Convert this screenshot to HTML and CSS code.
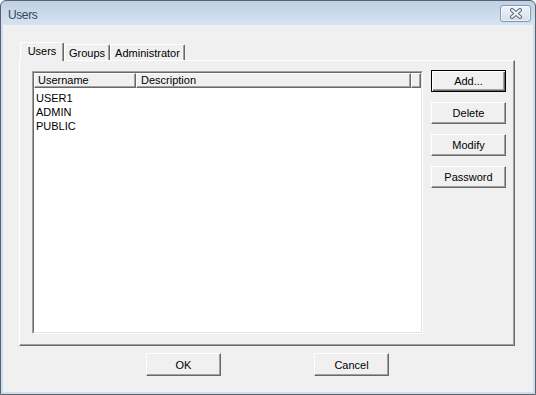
FILE: index.html
```html
<!DOCTYPE html>
<html lang="en">
<head>
  <meta charset="UTF-8">
  <title>Users</title>
  <link rel="stylesheet" href="styles.css">
</head>
<body>

  <div class="window">
    <div class="titlebar">
      <span class="title">Users</span>
      <button class="close" aria-label="Close">
        <svg width="14" height="11" viewBox="0 0 14 11">
          <path d="M3 2 L11 9 M11 2 L3 9" stroke="#5b6778" stroke-width="4" stroke-linecap="round"/>
          <path d="M3 2 L11 9 M11 2 L3 9" stroke="#f4f6f9" stroke-width="2" stroke-linecap="round"/>
        </svg>
      </button>
    </div>

    <div class="client">
      <div class="tabs">
        <div class="tab active tab-users">Users</div>
        <div class="tab tab-groups">Groups</div>
        <div class="tab tab-admin">Administrator</div>
      </div>

      <div class="panel">
        <div class="listview">
          <div class="listview-inner">
            <div class="lv-header">
              <div class="lv-col col-name">Username</div>
              <div class="lv-col col-desc">Description</div>
              <div class="lv-col col-fill"></div>
            </div>
            <ul class="lv-rows">
              <li>USER1</li>
              <li>ADMIN</li>
              <li>PUBLIC</li>
            </ul>
          </div>
        </div>

        <div class="side-buttons">
          <button class="btn default">Add...</button>
          <button class="btn">Delete</button>
          <button class="btn">Modify</button>
          <button class="btn">Password</button>
        </div>
      </div>

      <div class="dialog-buttons">
        <button class="btn">OK</button>
        <button class="btn">Cancel</button>
      </div>
    </div>
  </div>

</body>
</html>
```

FILE: styles.css
```css
body {
  margin: 0;
  background: #fff;
  font-family: "Liberation Sans", Arial, sans-serif;
  font-size: 11px;
  color: #000;
}

.window {
  width: 536px;
  height: 395px;
  box-sizing: border-box;
  border: 1px solid #58626e;
  border-radius: 6px 6px 0 0;
  padding: 0 2px 2px 2px;
  background: linear-gradient(#bfd0e4, #d6e3f1 24px, #cfdeee 25px);
  display: flex;
  flex-direction: column;
}

.titlebar {
  height: 24px;
  flex: none;
  display: flex;
  align-items: center;
  justify-content: space-between;
  padding: 0 2px 0 5px;
}

.title {
  font-size: 12px;
  letter-spacing: -0.4px;
  color: #3a4554;
  margin-top: 3px;
}

.close {
  width: 31px;
  height: 17px;
  padding: 0;
  border: 1px solid #8496b0;
  border-radius: 3px;
  background: linear-gradient(#eef3f9, #d5dfec);
  box-shadow: inset 0 0 0 1px rgba(255,255,255,0.6);
  display: flex;
  align-items: center;
  justify-content: center;
}

.client {
  flex: 1;
  background: #f0f0f0;
  border: 1px solid #eaf1f9;
  display: flex;
  flex-direction: column;
  padding: 16px 17px 15px 15px;
}

/* tab strip */
.tabs {
  display: flex;
  align-items: flex-end;
  height: 18px;
  padding-left: 1px;
  position: relative;
  z-index: 1;
}

.tab {
  box-sizing: border-box;
  height: 16px;
  padding-top: 1px;
  line-height: 15px;
  text-align: center;
  border-top: 1px solid #fff;
  border-left: 1px solid #fff;
  border-right: 1px solid #696969;
  border-radius: 2px 2px 0 0;
  box-shadow: inset -1px 0 #a0a0a0;
  background: #f0f0f0;
}

.tab.active {
  height: 19px;
  margin-bottom: -1px;
  padding-bottom: 2px;
}

.tab-users { width: 44px; }
.tab-groups { width: 46px; }
.tab-admin { width: 75px; }

.panel {
  flex: 1;
  display: flex;
  gap: 8px;
  padding: 10px 8px 11px 12px;
  border: 1px solid;
  border-color: #fff #696969 #696969 #fff;
  box-shadow: inset -1px -1px #a0a0a0;
}

/* list view */
.listview {
  flex: 1;
  border: 1px solid;
  border-color: #a0a0a0 #fff #fff #a0a0a0;
}

.listview-inner {
  height: 100%;
  box-sizing: border-box;
  border: 1px solid;
  border-color: #696969 #e3e3e3 #e3e3e3 #696969;
  background: #fff;
}

.lv-header {
  display: flex;
  height: 15px;
}

.lv-col {
  box-sizing: border-box;
  height: 15px;
  line-height: 13px;
  padding-left: 3px;
  background: #f0f0f0;
  border: 1px solid;
  border-color: #fff #696969 #696969 #fff;
  box-shadow: inset -1px -1px #a0a0a0;
}

.col-name { width: 102px; }
.col-desc { width: 275px; padding-left: 4px; }
.col-fill { flex: 1; }

.lv-rows {
  list-style: none;
  margin: 0;
  padding: 3px 0 0 2px;
}

.lv-rows li {
  line-height: 14px;
}

/* buttons */
.btn {
  box-sizing: border-box;
  width: 75px;
  height: 22px;
  padding: 0;
  font-family: "Liberation Sans", Arial, sans-serif;
  font-size: 11px;
  color: #000;
  background: #f0f0f0;
  border: 1px solid;
  border-color: #fff #696969 #696969 #fff;
  box-shadow: inset -1px -1px #a0a0a0;
}

.btn.default {
  border-color: #000;
  box-shadow: inset 1px 1px #fff, inset -1px -1px #696969, inset -2px -2px #a0a0a0;
}

.side-buttons {
  display: flex;
  flex-direction: column;
  gap: 10px;
  margin-top: -1px;
}

.dialog-buttons {
  display: flex;
  justify-content: center;
  gap: 93px;
  margin-top: 7px;
  padding-left: 1px;
}

.dialog-buttons .btn {
  height: 23px;
}
```
